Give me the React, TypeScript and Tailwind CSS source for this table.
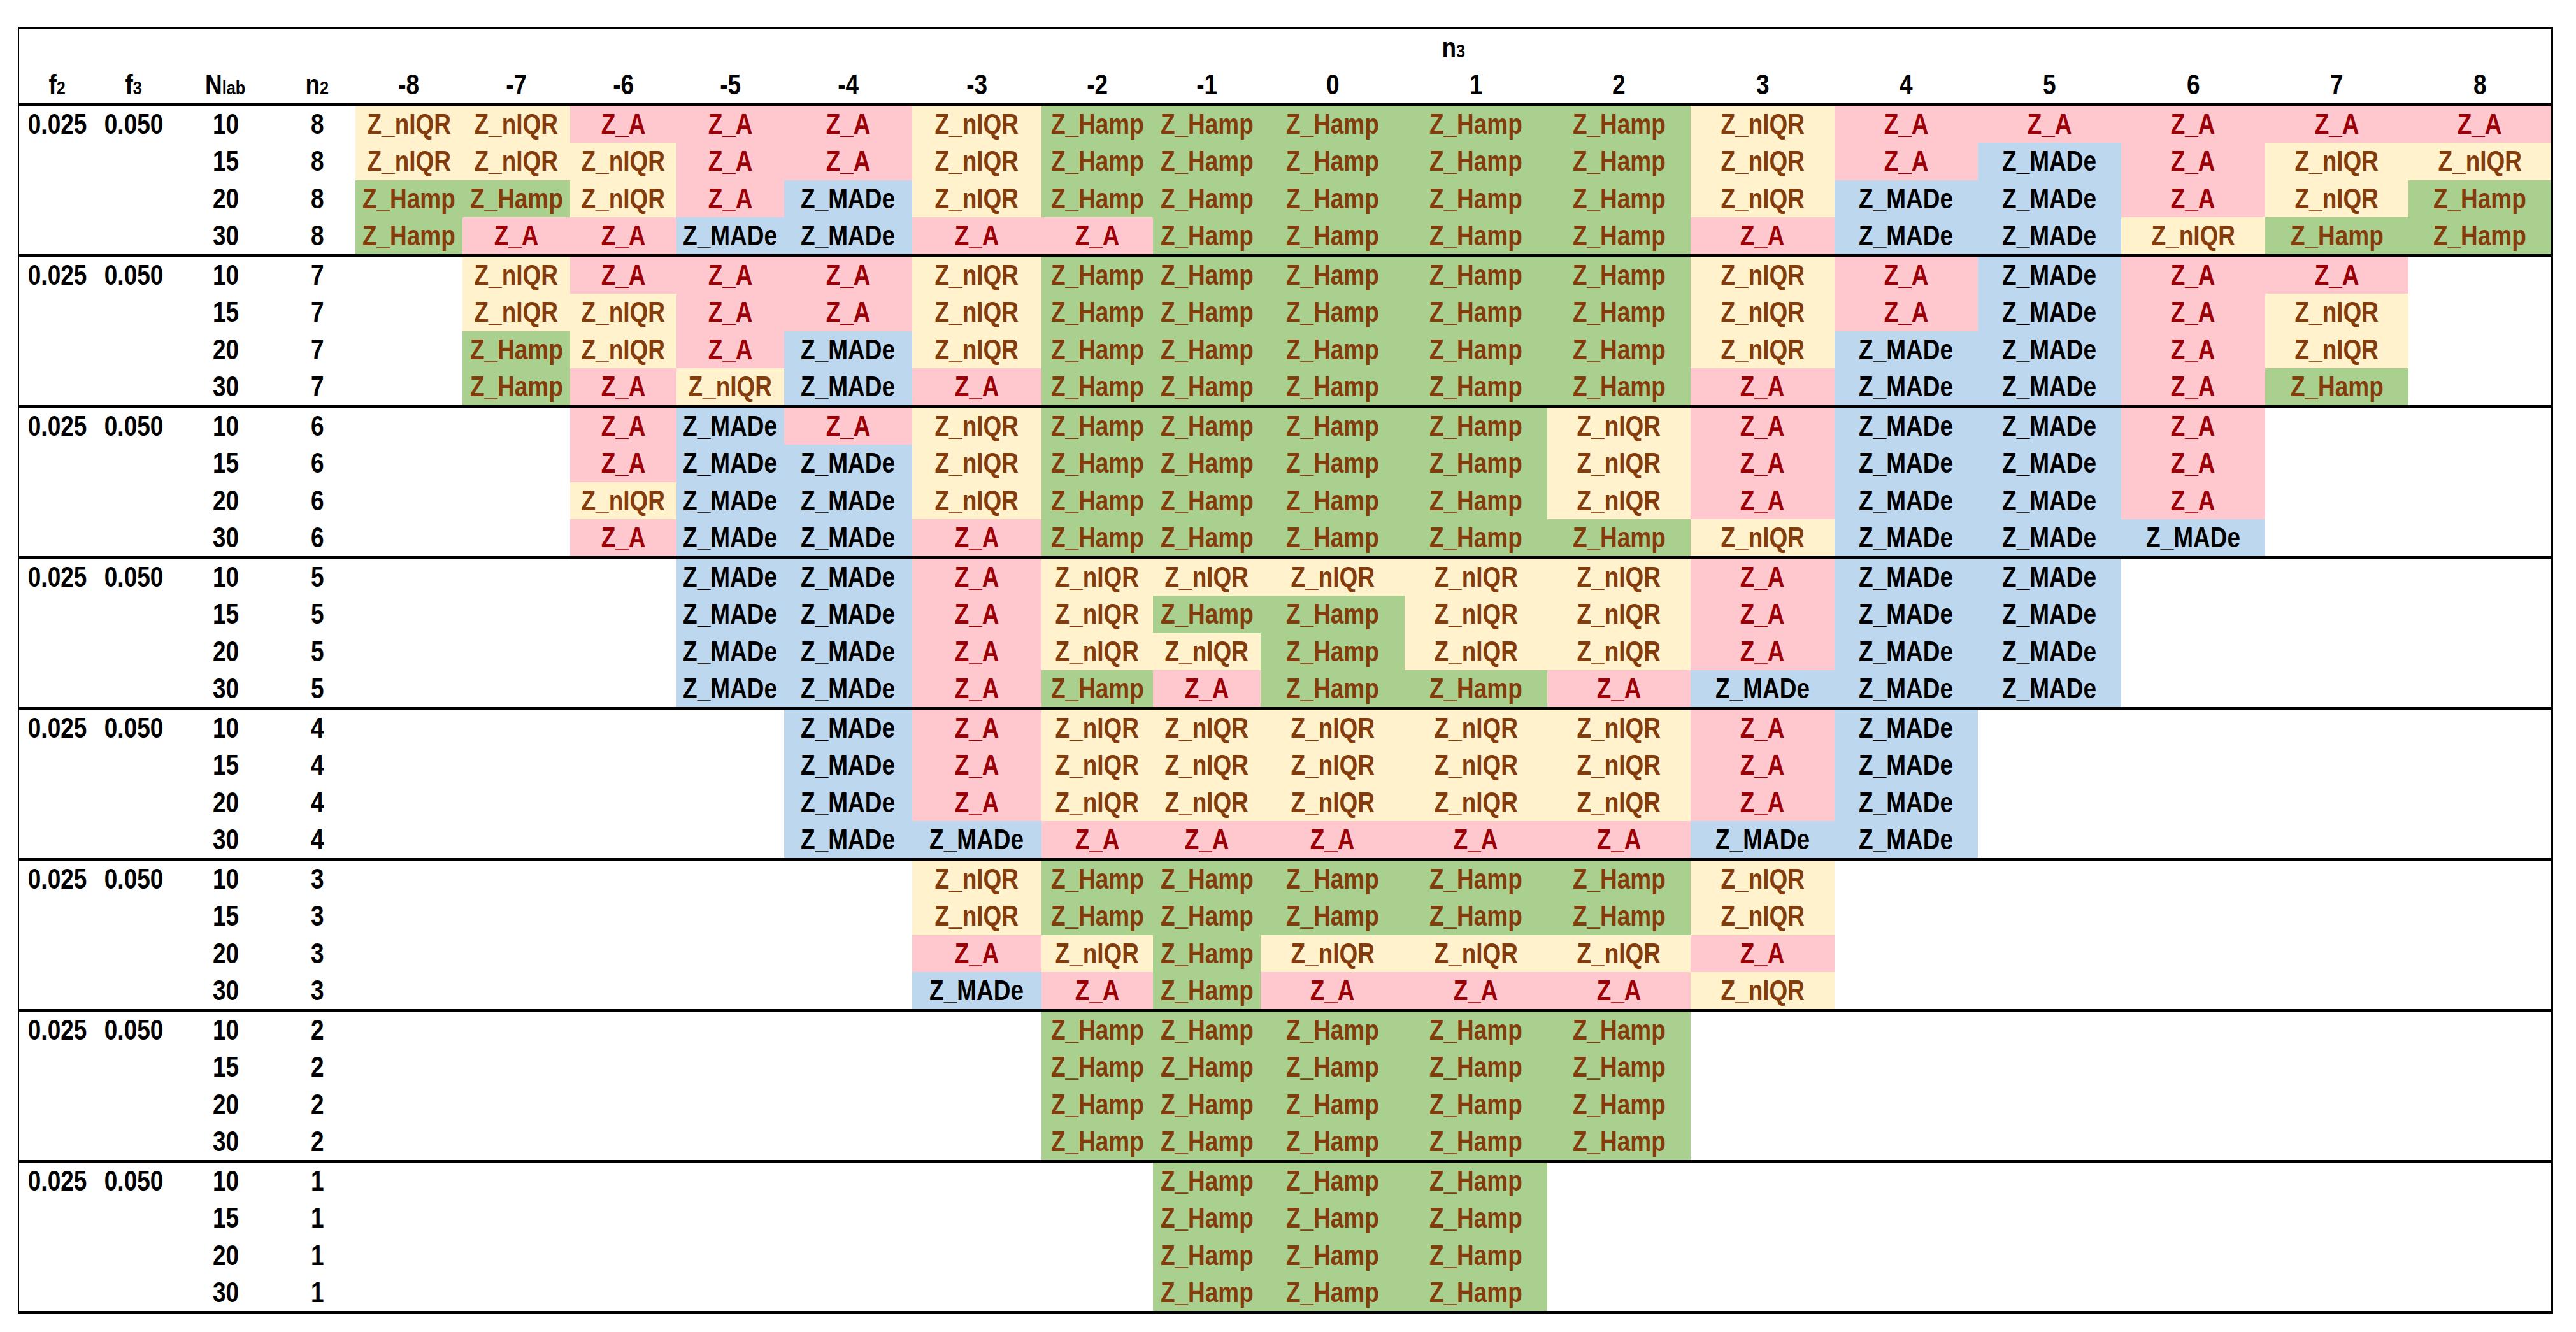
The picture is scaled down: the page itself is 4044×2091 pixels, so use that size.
const FONT = "font-['Liberation_Sans',Arial,sans-serif]";

const CELL: Record<string, { label: string; cls: string }> = {
  N: { label: "Z_nIQR", cls: "bg-[#fff2cc] text-[#843c0c]" },
  A: { label: "Z_A", cls: "bg-[#ffc7ce] text-[#9c0006]" },
  H: { label: "Z_Hamp", cls: "bg-[#a9d08e] text-[#843c0c]" },
  M: { label: "Z_MADe", cls: "bg-[#bdd7ee] text-black" },
};

const N3 = [-8, -7, -6, -5, -4, -3, -2, -1, 0, 1, 2, 3, 4, 5, 6, 7, 8];

const DATA_W = [
  "w-[168px]", "w-[169px]", "w-[167px]", "w-[169px]", "w-[201px]", "w-[203px]",
  "w-[175px]", "w-[169px]", "w-[226px]", "w-[224px]", "w-[225px]", "w-[226px]",
  "w-[225px]", "w-[225px]", "w-[226px]", "w-[225px]", "w-[224px]",
];

const NLAB = [10, 15, 20, 30];

// one string per row, one letter per n3 column, "." = empty
const GROUPS: { n2: number; rows: string[] }[] = [
  { n2: 8, rows: ["NNAAANHHHHHNAAAAA", "NNNAANHHHHHNAMANN", "HHNAMNHHHHHNMMANH", "HAAMMAAHHHHAMMNHH"] },
  { n2: 7, rows: [".NAAANHHHHHNAMAA.", ".NNAANHHHHHNAMAN.", ".HNAMNHHHHHNMMAN.", ".HANMAHHHHHAMMAH."] },
  { n2: 6, rows: ["..AMANHHHHNAMMA..", "..AMMNHHHHNAMMA..", "..NMMNHHHHNAMMA..", "..AMMAHHHHHNMMM.."] },
  { n2: 5, rows: ["...MMANNNNNAMM...", "...MMANHHNNAMM...", "...MMANNHNNAMM...", "...MMAHAHHAMMM..."] },
  { n2: 4, rows: ["....MANNNNNAM....", "....MANNNNNAM....", "....MANNNNNAM....", "....MMAAAAAMM...."] },
  { n2: 3, rows: [".....NHHHHHN.....", ".....NHHHHHN.....", ".....ANHNNNA.....", ".....MAHAAAN....."] },
  { n2: 2, rows: ["......HHHHH......", "......HHHHH......", "......HHHHH......", "......HHHHH......"] },
  { n2: 1, rows: [".......HHH.......", ".......HHH.......", ".......HHH.......", ".......HHH......."] },
];

// narrow bold face (Arial Narrow look) from Liberation Sans
function T({ children }: { children: React.ReactNode }) {
  return <span className="inline-block scale-x-[0.84] whitespace-nowrap">{children}</span>;
}

function Sub({ children }: { children: React.ReactNode }) {
  return <span className="text-[30px]">{children}</span>;
}

function HeaderRow() {
  return (
    <div className="h-[116px] flex flex-col">
      <div className="h-[58px] flex">
        <div className="w-[528px] shrink-0" />
        <div className="flex-1 flex items-center justify-center">
          <T>
            n<Sub>3</Sub>
          </T>
        </div>
      </div>
      <div className="h-[58px] flex items-center">
        <div className="w-[120px] shrink-0 text-center">
          <T>
            f<Sub>2</Sub>
          </T>
        </div>
        <div className="w-[120px] shrink-0 text-center">
          <T>
            f<Sub>3</Sub>
          </T>
        </div>
        <div className="w-[168px] shrink-0 text-center">
          <T>
            N<Sub>lab</Sub>
          </T>
        </div>
        <div className="w-[120px] shrink-0 text-center">
          <T>
            n<Sub>2</Sub>
          </T>
        </div>
        {N3.map((n, i) => (
          <div key={n} className={`${DATA_W[i]} shrink-0 text-center`}>
            <T>{n}</T>
          </div>
        ))}
      </div>
    </div>
  );
}

function Group({ n2, rows }: { n2: number; rows: string[] }) {
  return (
    <div className="border-t-4 border-black">
      {rows.map((row, r) => (
        <div key={r} className="h-[58.25px] flex">
          <div className="w-[120px] shrink-0 flex items-center justify-center">
            {r === 0 && <T>0.025</T>}
          </div>
          <div className="w-[120px] shrink-0 flex items-center justify-center">
            {r === 0 && <T>0.050</T>}
          </div>
          <div className="w-[168px] shrink-0 flex items-center justify-center">
            <T>{NLAB[r]}</T>
          </div>
          <div className="w-[120px] shrink-0 flex items-center justify-center">
            <T>{n2}</T>
          </div>
          {row.split("").map((k, i) => {
            const c = CELL[k];
            return (
              <div
                key={i}
                className={`${DATA_W[i]} shrink-0 flex items-center justify-center ${c ? c.cls : ""}`}
              >
                {c && <T>{c.label}</T>}
              </div>
            );
          })}
        </div>
      ))}
    </div>
  );
}

export default function App() {
  return (
    <div className={`min-h-screen bg-white pt-[42px] pl-[28px] ${FONT} text-[44px] font-bold leading-none text-black`}>
      <div className="w-[3980px] border-t-4 border-l-2 border-r-[3px] border-b-4 border-black">
        <HeaderRow />
        {GROUPS.map((g) => (
          <Group key={g.n2} n2={g.n2} rows={g.rows} />
        ))}
      </div>
    </div>
  );
}
